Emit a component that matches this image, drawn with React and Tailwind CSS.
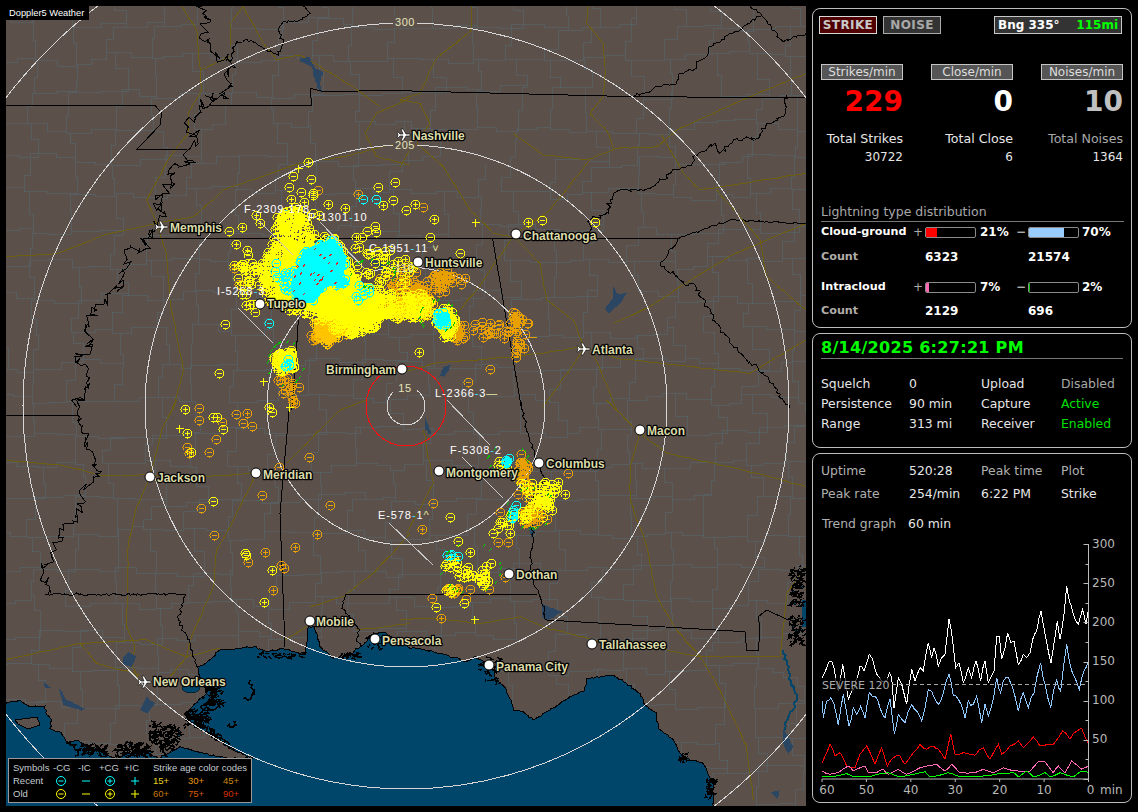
import React, { useMemo } from 'react';

const LAND = '#5c504b';
const WATER = '#00466b';
const COUNTY = '#585e60';
const ROAD = '#6e5e10';
const LAKE = '#2a4663';

const rngFrom = (seed) => () => {
  seed |= 0;
  seed = (seed + 0x6d2b79f5) | 0;
  let t = Math.imul(seed ^ (seed >>> 15), 1 | seed);
  t = (t + Math.imul(t ^ (t >>> 7), 61 | t)) ^ t;
  return ((t ^ (t >>> 14)) >>> 0) / 4294967296;
};

const parse = (s) => s.trim().split(/\s+/).map((p) => p.split(',').map(Number));
const toPath = (pts, close) => `M${pts.map((p) => `${p[0].toFixed(1)} ${p[1].toFixed(1)}`).join('L')}${close ? 'Z' : ''}`;

// subdivide and wobble a line so that rivers and coasts look hand traced
const jag = (pts, amp, step, rand) => {
  const out = [];
  for (let i = 0; i < pts.length - 1; i++) {
    const [ax, ay] = pts[i];
    const [bx, by] = pts[i + 1];
    const n = Math.max(1, Math.round(Math.hypot(bx - ax, by - ay) / step));
    for (let k = 0; k < n; k++) {
      const t = k / n;
      const w = k === 0 ? 0 : amp;
      out.push([ax + (bx - ax) * t + (rand() - 0.5) * w, ay + (by - ay) * t + (rand() - 0.5) * w]);
    }
  }
  out.push(pts[pts.length - 1]);
  return out;
};

// crops of the picture: lines are traced per quadrant at 3x
const QUADS = {
  a: [0, 0],
  b: [400, 0],
  c: [0, 400],
  d: [400, 400],
  z: [200, 170],
};
const fromQuad = (q, pts) => pts.map(([x, y]) => [QUADS[q][0] + x / 3, QUADS[q][1] + y / 3]);

const STATE_LINES = [
  ['a', '18,316 465,316 485,340 480,375 412,447 560,447', 0],
  ['a', '605,18 625,60 605,100 640,160 680,180 695,200 680,240 695,250 670,295 640,280 625,320 605,305 605,340 565,380 590,410 565,450 575,480 510,520 525,550 490,580 460,610 490,640 470,680 430,715 440,745 390,745 370,810 370,860 330,880 290,930 255,995 275,1040 225,1070 260,1130 230,1220', 12],
  ['c', '230,0 240,20 235,65 270,150 300,220 240,270 245,320 190,390 155,470 130,510 145,583', 10],
  ['c', '18,45 235,45', 0],
  ['c', '135,583 555,583 535,660 570,730 590,800', 3],
  ['a', '630,315 935,315 930,265 970,275 1230,270', 0],
  ['a', '690,185 710,125 740,118 800,150 835,165 850,130 835,90 850,65 900,60 930,40 910,18', 3],
  ['b', '0,272 700,290 1220,293', 0],
  ['b', '700,290 790,255 830,250 840,220 890,205 890,185 920,170 925,145 1085,45 1050,18', 3],
  ['b', '1085,45 1150,125 1218,100', 3],
  ['b', '1160,285 1150,350 1100,370 1075,415 1000,420 960,460 945,430 885,465 875,495 830,510 750,565 660,570 630,600 625,640 570,660 568,718', 4],
  ['a', '430,715 1230,715', 0],
  ['b', '0,715 838,715', 0],
  ['b', '838,715 990,660 1218,670', 2],
  ['b', '838,715 780,790 855,855 885,855 960,990 1040,1080 1100,1130 1170,1225', 4],
  ['b', '278,718 365,1230', 0],
  ['d', '360,0 385,100 405,170 435,240 400,290 400,420 390,510 425,610 440,660', 3],
  ['d', '440,660 1035,695 1040,750 1075,750 1080,690 1075,650 1100,630 1165,660', 0],
  ['a', '895,960 890,1040 875,1230', 0],
  ['c', '870,0 840,340 855,740', 0],
  ['c', '1035,583 1230,583', 0],
  ['d', '0,583 410,583', 0],
  ['c', '1035,583 1025,625 1080,690 1070,720 1085,740', 3],
];

const ROADS = [
  ['a', '545,18 590,90 605,270 565,340 565,400 510,470 440,600 470,670 500,760 510,900 540,1060 550,1110 520,1230'],
  ['c', '530,0 485,90 450,230 410,320 385,430 380,680 405,740 395,790 420,850'],
  ['a', '18,770 170,760 330,700 470,670 580,650 670,570 900,490 1030,470 1190,430'],
  ['a', '730,18 690,70 690,140'],
  ['a', '730,20 790,130 830,180 900,165 1060,260 1140,320'],
  ['a', '1230,295 1130,340 1095,400 1130,470 1230,495'],
  ['a', '600,210 690,170'],
  ['b', '565,18 560,70 610,130 615,200 610,290 570,340 625,400 640,445'],
  ['b', '215,18 215,90 105,180 60,280 0,300'],
  ['b', '0,300 60,310 90,370 50,430 130,500 210,630 280,700 340,710'],
  ['b', '40,430 0,500'],
  ['b', '340,400 430,465 560,480 650,445 770,440 830,390 1050,290 1218,220'],
  ['b', '570,480 450,630 340,710 230,870 120,1000'],
  ['b', '340,710 420,790 440,900 520,960 550,1040'],
  ['b', '640,970 750,920 840,860 985,770 1218,670'],
  ['b', '785,405 850,520 900,570 1030,550 1218,520'],
  ['b', '950,570 1080,720 1100,830 1218,930'],
  ['b', '0,1120 100,1090 350,1070 550,1040 650,1075 1050,1120 1218,1020'],
  ['b', '550,1050 430,1220'],
  ['b', '580,1060 650,1230'],
  ['c', '18,180 180,195 300,225 440,225 620,230 770,220 705,350 650,450 640,560 570,720 560,770 510,830'],
  ['c', '860,190 1020,30 1100,0'],
  ['c', '18,780 240,730 440,720 560,770 660,745'],
  ['c', '240,730 290,790 420,825'],
  ['c', '930,620 1030,590 1130,510 1230,400'],
  ['c', '855,720 920,680'],
  ['c', '1070,690 1230,670'],
  ['d', '0,660 90,655 240,670 360,650 430,680 580,720 800,750 900,770 1140,770'],
  ['d', '720,100 690,200 690,300 740,440 770,590 830,690 900,770 960,870 1040,1040 1060,1200'],
  ['d', '620,0 720,100 800,160 1030,210 1218,260'],
  ['d', '1140,770 1160,580 1218,500'],
  ['d', '70,90 100,250 20,400'],
];

const LAKES = [
  ['a', '900,175 930,170 945,205 970,215 960,250 970,285 950,260 935,200 900,185'],
  ['b', '640,860 650,880 680,880 660,910 625,940 615,925 640,895'],
  ['b', '130,1100 155,1095 135,1130 118,1130'],
  ['z', '505,275 530,270 575,295 560,305 530,285'],
  ['c', '385,757 410,770 395,800 370,795 368,775'],
  ['c', '130,845 155,865 135,865'],
  ['c', '175,860 200,900 255,925 245,932 190,915'],
  ['c', '440,890 465,910 440,940 420,930'],
  ['d', '75,50 95,100 85,102 75,80'],
  ['d', '385,380 410,380 395,415'],
  ['d', '425,610 470,630 490,635 445,660 425,650'],
  ['d', '1150,985 1180,1040 1165,1065 1150,1030'],
  ['d', '1110,1175 1140,1170 1135,1200'],
];

const COAST_WEST = '18,910 60,900 90,920 135,918 140,945 155,960 150,985 185,1000 200,1030 230,1020 260,1040 300,1045 320,1065 345,1075 420,1050 445,1060 475,1075 540,1040 610,1060 690,1075 760,1075';
const COAST_C = '760,1075 700,1050 640,1010 580,975 555,945 585,910 620,880 590,800 610,795 640,770 660,750 720,745 760,740 800,755 850,745 915,765 925,680 945,680 960,740 1000,775 1040,770 1075,745 1090,735 1125,700 1160,700 1230,745';
const COAST_D = '60,745 140,765 200,785 225,770 265,790 300,850 320,870 340,930 370,935 400,960 450,930 510,890 555,870 560,835 640,825 680,850 720,880 735,915 770,940 775,985 820,1020 850,1075 910,1090 940,1150 940,1218';
const MARSH_LINES = [
  '455,960 470,985 450,1000 490,1010 520,1050 480,1040 500,1070',
  '555,945 600,965 570,930 620,990 660,1020 630,985 700,1050',
  '620,860 650,880 625,900 660,910 640,930 610,915 600,945',
  '350,1060 390,1025 400,1060 440,1040 420,1070',
  '250,1030 290,1055 320,1040 310,1070',
  '200,1025 240,1050 225,1070',
  '750,840 762,870 755,895 730,895',
  '680,980 710,975 700,965',
];

const SCATTER = [
  ['a', 'ym878,527 y+895,505 yp925,487 ym932,538 ym868,561 ym904,577 yp872,596 yp912,607 ym940,585 om955,570 yp940,578 yp985,613 yp1036,625 ym1135,562 ym1186,547 ym1180,600 op1075,583 cm1088,598 cm1127,598 yp1150,616 ym1218,631 yp725,682 ym688,694 yp779,670 yp826,688 yp709,732 yp742,750 om703,805 ym1078,742 om718,853 ym766,937 ym676,973 cm808,970 ym658,1120 y+790,1144 om843,1150 om875,1150 om880,1200 om870,1170 om875,1190 om885,1210 om850,1180'],
  ['b', 'yp46,613 ym19,631 om70,622 yp103,658 y+225,665 yp385,667 ym425,661 ym91,712 ym180,760 ym586,667 yp58,1057 om271,1108 om205,1145 om385,970 op373,1045 om349,1072 om349,1045 o-395,1012 om350,1022 op345,998'],
  ['c', 'yp556,28 om598,25 om598,61 yp640,52 yp652,52 om667,67 ym670,88 om709,43 op742,40 om730,70 om757,79 yp808,22 ym817,37 yp562,100 y+538,85 om649,118 om562,142 yp574,157 op568,160 om628,157 om838,202 om928,172 ym640,304 om604,325 om787,286 om643,406 om991,316 op952,403 op886,442 op796,457 ym736,460 ym738,465 om745,485 om844,496 om853,505 yp817,511 op820,571 yp793,607 y+866,20 op880,5'],
  ['d', 'om505,220 om100,310 ym151,352 op67,388 ym175,424 om325,427 om295,427 yp211,457 ym274,490 om316,530 om268,568 om211,568 om97,595 ym109,622 op124,655 y+223,658 om199,598 ym193,610 ym278,400 ym295,385 om300,335 ym305,365'],
];

const SPOTS = [
  // cx, cy, sx, sy, n, layer (plain screen coords)
  [544, 497, 8, 9, 45, 'y'],
  [532, 514, 5, 5, 35, 'o'],
  [522, 470, 4, 6, 18, 'o'],
  [526, 488, 6, 6, 10, 'o'],
  [507, 461, 2, 2, 5, 'c'],
  [513, 513, 1, 5, 6, 'c'],
  [519, 518, 7, 6, 18, 'y'],
  [500, 463, 5, 3, 5, 'y'],
  [450, 554, 3, 1, 2, 'c'],
  [455, 554, 3, 1, 2, 'c'],
  [452, 560, 6, 4, 8, 'y'],
  [466, 576, 4, 4, 8, 'y'],
  [480, 580, 5, 3, 8, 'y'],
  [484, 574, 3, 3, 5, 'y'],
  [448, 590, 5, 2, 10, 'o'],
  [452, 590, 5, 2, 4, 'y'],
  [490, 328, 15, 5, 26, 'o'],
  [515, 320, 5, 4, 14, 'o'],
  [518, 345, 3, 8, 5, 'o'],
];

const CYAN = '310,240 400,205 440,260 430,320 450,345 380,350 340,400 290,400 270,350 290,300';
const YELLOW = '240,135 305,130 345,195 405,200 450,280 480,340 560,365 660,365 700,400 680,440 560,455 490,485 440,495 380,475 345,445 280,425 205,405 170,320 155,290 205,245 225,195';
const YELLOW_CORE = '285,215 330,220 400,220 440,280 470,345 560,375 640,380 620,440 560,445 490,470 440,480 380,465 350,430 280,405 240,385 215,320 225,285 255,250';
const GOLD_EAST = '600,380 685,375 700,400 680,440 590,445';
const GOLD = '340,450 380,450 420,460 470,480 410,505 380,525 345,495';
const EAST_Y = '695,425 740,410 765,440 770,490 730,505 705,470';
const EAST_CYAN = '705,430 740,425 745,465 715,468';
const LOW_Y = '220,555 275,535 288,590 270,610 232,600 215,575';

const inPoly = (x, y, poly) => {
  let hit = false;
  for (let i = 0, j = poly.length - 1; i < poly.length; j = i++) {
    const [xi, yi] = poly[i];
    const [xj, yj] = poly[j];
    if (yi > y !== yj > y && x < ((xj - xi) * (y - yi)) / (yj - yi) + xi) hit = !hit;
  }
  return hit;
};

const symbolPath = (x, y, kind) => {
  const r = 4.5;
  const ring = `M${x - r} ${y}a${r} ${r} 0 1 0 ${r * 2} 0a${r} ${r} 0 1 0 ${-r * 2} 0`;
  if (kind === 'm') return `${ring}M${x - 2.5} ${y}h5`;
  if (kind === 'p') return `${ring}M${x - 2.5} ${y}h5M${x} ${y - 2.5}v5`;
  if (kind === '-') return `M${x - 4} ${y}h8`;
  return `M${x - 4} ${y}h8M${x} ${y - 4}v8`;
};

const buildStrikes = () => {
  const rand = rngFrom(4242);
  const layers = { o: '', g: '', y: '', c: '' };
  const add = (layer, x, y, kind) => {
    layers[layer] += symbolPath(Math.round(x) + 0.5, Math.round(y) + 0.5, kind);
  };
  const kindOf = () => (rand() < 0.6 ? 'm' : 'p');
  const gauss = () => Math.sqrt(-2 * Math.log(rand() + 1e-6)) * Math.cos(6.283 * rand());

  SCATTER.forEach(([q, s]) => {
    [...s.matchAll(/([yoc])([mp+-])(\d+),(\d+)/g)].forEach(([, c, k, x, y]) => {
      const [[ax, ay]] = fromQuad(q, [[+x, +y]]);
      add(c, ax, ay, k);
    });
  });

  const fillPoly = (str, n, layer, kindFn) => {
    const poly = fromQuad('z', parse(str));
    const xs = poly.map((p) => p[0]);
    const ys = poly.map((p) => p[1]);
    let done = 0;
    let tries = 0;
    while (done < n && tries < n * 30) {
      tries += 1;
      const x = Math.min(...xs) + rand() * (Math.max(...xs) - Math.min(...xs));
      const y = Math.min(...ys) + rand() * (Math.max(...ys) - Math.min(...ys));
      if (inPoly(x, y, poly)) {
        add(layer, x, y, kindFn());
        done += 1;
      }
    }
  };

  fillPoly(YELLOW, 700, 'y', kindOf);
  fillPoly(GOLD, 70, 'g', kindOf);
  fillPoly(GOLD_EAST, 40, 'g', kindOf);
  fillPoly(EAST_Y, 50, 'y', kindOf);
  fillPoly(LOW_Y, 40, 'y', kindOf);
  fillPoly(CYAN, 90, 'c', kindOf);
  fillPoly('190,285 310,240 310,400 240,370', 26, 'c', kindOf);
  fillPoly(EAST_CYAN, 16, 'c', kindOf);
  fillPoly('235,565 270,565 268,590 235,590', 5, 'c', kindOf);
  fillPoly('470,345 540,330 530,400 460,410', 7, 'c', kindOf);

  // orange bands along the line of storms
  [[640, 360, 70, 30, 50], [735, 325, 35, 15, 30], [770, 490, 15, 30, 12], [260, 640, 30, 15, 8], [360, 490, 30, 25, 18], [600, 330, 60, 40, 20]].forEach(([zx, zy, sx, sy, n]) => {
    for (let i = 0; i < n; i++) {
      const [[x, y]] = fromQuad('z', [[zx + gauss() * sx * 0.6, zy + gauss() * sy * 0.6]]);
      add('o', x, y, kindOf());
    }
  });
  // loose yellow fringe of the main cell
  [[140, 310, 30, 70, 26], [270, 140, 50, 30, 30], [540, 250, 50, 60, 22], [560, 310, 70, 30, 18]].forEach(([zx, zy, sx, sy, n]) => {
    for (let i = 0; i < n; i++) {
      const [[x, y]] = fromQuad('z', [[zx + gauss() * sx * 0.6, zy + gauss() * sy * 0.6]]);
      add('y', x, y, kindOf());
    }
  });
  SPOTS.forEach(([cx, cy, sx, sy, n, layer]) => {
    for (let i = 0; i < n; i++) add(layer, cx + gauss() * sx, cy + gauss() * sy, kindOf());
  });

  // little tick marks around the cells
  let green = '';
  let red = '';
  [[372, 275, 22, 14], [285, 365, 18, 22], [437, 318, 18, 16], [507, 461, 20, 14], [530, 510, 24, 20], [470, 570, 30, 25]].forEach(([cx, cy, rx, ry]) => {
    for (let i = 0; i < 16; i++) {
      const a = rand() * 6.283;
      const x = cx + Math.cos(a) * rx;
      const y = cy + Math.sin(a) * ry;
      green += `M${x.toFixed(1)} ${y.toFixed(1)}l2 -3`;
    }
  });
  for (let i = 0; i < 24; i++) {
    red += `M${(292 + rand() * 46).toFixed(1)} ${(250 + rand() * 46).toFixed(1)}l2 -2`;
  }
  return { ...layers, green, red };
};

const buildMap = () => {
  const rand = rngFrom(77);
  const roads = ROADS.map(([q, s]) => toPath(jag(fromQuad(q, parse(s)), 1, 7, rand)));
  const states = STATE_LINES.map(([q, s, w]) => toPath(w ? jag(fromQuad(q, parse(s)), w, 2.6, rand) : fromQuad(q, parse(s))));
  const lakes = LAKES.map(([q, s]) => toPath(jag(fromQuad(q, parse(s)), 1.4, 3, rand), true));

  // gulf in two parts either side of the river delta
  const west = toPath(jag(fromQuad('c', parse(COAST_WEST)), 1.8, 2.4, rand));
  const east = toPath(jag([...fromQuad('c', parse(COAST_C)), ...fromQuad('d', parse(COAST_D))], 1.8, 2.4, rand));
  const waterWest = `${west}L253 806L6 806Z`;
  const waterEast = `${east}L713 806L253 806Z`;
  const marshLines = MARSH_LINES.map((s) => toPath(jag(fromQuad('c', parse(s)), 5, 1.6, rand)));

  // county grid
  const cx = 40;
  const cy = 34;
  const grid = [];
  for (let r = 0; r < 25; r++) {
    const row = [];
    for (let c = 0; c < 22; c++) {
      row.push([c * cx - 10 + (rand() - 0.5) * 18 + (r % 2) * 10, r * cy - 10 + (rand() - 0.5) * 14]);
    }
    grid.push(row);
  }
  let county = '';
  const edge = (a, b) => {
    const mid = [(a[0] + b[0]) / 2 + (rand() - 0.5) * 8, (a[1] + b[1]) / 2 + (rand() - 0.5) * 8];
    county += `M${a[0].toFixed(0)} ${a[1].toFixed(0)}L${mid[0].toFixed(0)} ${a[1].toFixed(0)}L${mid[0].toFixed(0)} ${mid[1].toFixed(0)}L${b[0].toFixed(0)} ${mid[1].toFixed(0)}L${b[0].toFixed(0)} ${b[1].toFixed(0)}`;
  };
  grid.forEach((row, r) =>
    row.forEach((p, c) => {
      if (c < row.length - 1 && rand() > 0.1) edge(p, row[c + 1]);
      if (r < grid.length - 1 && rand() > 0.1) edge(p, grid[r + 1][c]);
    })
  );

  // marsh speckle: small water holes with a black rim, close to river mouths
  let marsh = '';
  const blobs = [
    ['c', 640, 885, 25, 30, 50],
    ['c', 590, 955, 35, 25, 70],
    ['c', 490, 1005, 45, 30, 110],
    ['c', 400, 1050, 55, 20, 70],
    ['c', 280, 1045, 40, 15, 50],
    ['c', 1050, 765, 25, 8, 20],
    ['c', 840, 765, 70, 6, 30],
    ['c', 1125, 725, 25, 18, 20],
    ['d', 265, 810, 30, 40, 30],
    ['d', 1190, 560, 20, 60, 90],
    ['d', 1190, 690, 20, 40, 70],
    ['d', 930, 1165, 12, 30, 30],
    ['d', 850, 1075, 12, 15, 12],
  ];
  blobs.forEach(([q, x, y, sx, sy, n]) => {
    for (let i = 0; i < n; i++) {
      const [[px, py]] = fromQuad(q, [[x + (rand() - 0.5) * sx * 2, y + (rand() - 0.5) * sy * 2]]);
      marsh += `M${px.toFixed(1)} ${py.toFixed(1)}l${(rand() * 6 - 3).toFixed(1)} ${(rand() * 4 - 1).toFixed(1)}l${(rand() * 4).toFixed(1)} ${(rand() * 4 - 3).toFixed(1)}z`;
    }
  });
  const river = toPath(jag(fromQuad('d', parse('1150,750 1165,810 1190,900 1165,950 1155,990')), 3, 2.5, rand));
  const eastWater = toPath(fromQuad('d', parse('1205,600 1220,600 1220,680 1205,680')), true);
  return { roads, states, lakes, waterWest, waterEast, west, east, marshLines, county, marsh, river, eastWater };
};

const DOT_CITIES = [
  ['Tupelo', 260, 304, 267, 308],
  ['Huntsville', 418, 262, 425, 267],
  ['Chattanooga', 516, 234, 523, 240],
  ['Birmingham', 402, 369, 326, 374],
  ['Macon', 640, 430, 647, 435],
  ['Columbus', 539, 463, 546, 468],
  ['Montgomery', 439, 471, 446, 477],
  ['Jackson', 150, 477, 157, 482],
  ['Meridian', 256, 473, 263, 479],
  ['Dothan', 509, 574, 516, 579],
  ['Mobile', 310, 621, 316, 626],
  ['Pensacola', 375, 639, 382, 645],
  ['Panama City', 489, 665, 496, 671],
  ['Tallahassee', 592, 644, 599, 649],
];
const PLANE_CITIES = [
  ['Nashville', 404, 135, 412, 140],
  ['Memphis', 162, 227, 170, 232],
  ['Atlanta', 584, 349, 592, 354],
  ['New Orleans', 145, 682, 153, 686],
];
const CELLS = [
  ['F', '2309', '178', '', 244, 213, 255, 217, 293, 255],
  ['P', '1301', '10', '', 308, 221, 320, 222, 364, 268],
  ['C', '1951', '11', ' ˅', 369, 252, 0, 0, 0, 0],
  ['I', '5268', '3', '', 217, 295, 238, 308, 273, 343],
  ['L', '2366', '3', '—', 435, 397, 447, 400, 490, 445],
  ['F', '5308', '2', '', 450, 454, 462, 457, 503, 498],
  ['E', '578', '1', '^', 378, 519, 389, 523, 433, 565],
];
const RANGE_LABELS = [
  ['300', 405, 26],
  ['205', 405, 149],
  ['110', 405, 272],
  ['15', 405, 392],
];

const RadarMap = () => {
  const map = useMemo(buildMap, []);
  const strikes = useMemo(buildStrikes, []);
  return (
    <svg viewBox="6 6 800 800" className="block w-[800px] h-[800px]" shapeRendering="crispEdges">
      <rect x="6" y="6" width="800" height="800" fill={LAND} />
      <path d={map.county} fill="none" stroke={COUNTY} strokeWidth="1" />
      <path d={map.roads.join('')} fill="none" stroke={ROAD} strokeWidth="1" />
      <path d={map.waterWest} fill={WATER} />
      <path d={map.waterEast} fill={WATER} />
      <path d={map.west + map.east} fill="none" stroke="#000" strokeWidth="1" />
      <path d="M15 720L37 717L40 725L28 729L18 724Z" fill={LAND} stroke="#000" strokeWidth="1" />
      <ellipse cx="191" cy="688" rx="9" ry="5" fill={WATER} stroke="#000" strokeWidth="0.5" />
      <path d={map.lakes.join('')} fill={LAKE} />
      <path d={map.river} fill="none" stroke={WATER} strokeWidth="2" />
      <path d={map.eastWater} fill={WATER} />
      <path d={map.marsh} fill={WATER} stroke="#000" strokeWidth="1" />
      <path d={map.marshLines.join('')} fill="none" stroke="#000" strokeWidth="1.5" />
      <path d={map.states.join('')} fill="none" stroke="#000" strokeWidth="1" />

      {[505, 383, 261, 139, 19].map((r) => (
        <circle key={r} cx="406" cy="406" r={r} fill="none" stroke="#d6d6d6" strokeWidth="1" />
      ))}
      <circle cx="406" cy="406" r="40" fill="none" stroke="#ff1010" strokeWidth="1" />
      {RANGE_LABELS.map(([t, x, y]) => (
        <rect key={t} x={x - 12} y={y - 10} width="24" height="12" fill={LAND} />
      ))}

      <g fill="none" strokeWidth="1">
        <path d={toPath(fromQuad('z', parse(YELLOW_CORE)), true)} fill="#ffff00" stroke="none" />
        <path d={toPath(fromQuad('z', parse(GOLD)), true)} fill="#ffc400" stroke="none" />
        <path d={toPath(fromQuad('z', parse(EAST_Y)), true)} fill="#ffe600" stroke="none" />
        <path d={toPath(fromQuad('z', parse(LOW_Y)), true)} fill="#ffd000" stroke="none" />
        <path d={strikes.o} stroke="#e8a000" />
        <path d={strikes.g} stroke="#ffc400" />
        <path d={toPath(fromQuad('z', parse(GOLD_EAST)), true)} fill="#ffc400" stroke="none" />
        <path d={strikes.y} stroke="#ffff00" />
        <path d={toPath(fromQuad('z', parse(CYAN)), true)} fill="#00ffff" stroke="none" />
        <path d={toPath(fromQuad('z', parse(EAST_CYAN)), true)} fill="#00ffff" stroke="none" />
        <path d={strikes.c} stroke="#00ffff" />
        <path d={strikes.green} stroke="#00c000" />
        <path d={strikes.red} stroke="#e02020" />
      </g>

      {RANGE_LABELS.map(([t, x, y]) => (
        <text key={t} x={x} y={y} textAnchor="middle" fontFamily="'Liberation Sans', sans-serif" fontSize="11" letterSpacing="0.6" fill="#e4e4b8">
          {t}
        </text>
      ))}

      {CELLS.map(([a, b, c, tail, x, y, x1, y1, x2, y2]) => (
        <g key={a + b}>
          {x2 ? <line x1={x1} y1={y1} x2={x2} y2={y2} stroke="#c8c8c8" strokeWidth="1" /> : null}
          <text x={x} y={y} fontFamily="'Liberation Sans', sans-serif" fontSize="11" letterSpacing="0.9" fill="#ffffff">
            {a}-{b}
            <tspan fill="#40e0ff">-</tspan>
            {c}
            <tspan fill="#e8e8a0">{tail}</tspan>
          </text>
        </g>
      ))}

      {DOT_CITIES.map(([name, dx, dy]) => (
        <circle key={name} cx={dx} cy={dy} r="5" fill="#fff" stroke="#000" strokeWidth="1" shapeRendering="auto" />
      ))}
      {PLANE_CITIES.map(([name, dx, dy]) => (
        <path
          key={name}
          transform={`translate(${dx} ${dy})`}
          d="M7 0L5 -1L2 -1L-1 -6L-3 -6L-1 -1L-4 -1L-6 -3L-7 -3L-6 0L-7 3L-6 3L-4 1L-1 1L-3 6L-1 6L2 1L5 1Z"
          fill="#fff"
          stroke="#000"
          strokeWidth="0.6"
          shapeRendering="auto"
        />
      ))}
      {[...DOT_CITIES, ...PLANE_CITIES].map(([name, , , tx, ty]) => (
        <text
          key={name}
          x={tx}
          y={ty}
          fontFamily="'Liberation Sans', sans-serif"
          fontSize="12"
          fontWeight="700"
          fill="#dcdcaa"
          stroke="#000"
          strokeWidth="2.5"
          paintOrder="stroke"
          strokeLinejoin="round"
        >
          {name}
        </text>
      ))}
    </svg>
  );
};

const LEGEND_COLS = 'grid grid-cols-[40px_25px_21px_25px_29px_35px_35px_auto] items-center h-[13px]';

const LegendSym = ({ color, kind, className = '' }) => (
  <svg viewBox="-6 -6 12 12" className={`w-[12px] h-[12px] ${className}`}>
    <path d={symbolPath(0, 0, kind)} fill="none" stroke={color} strokeWidth="1" />
  </svg>
);

const Legend = () => (
  <div className="absolute left-[2px] bottom-[3px] w-[244px] h-[45px] bg-black border border-[#999] pl-[4px] pt-[2px] font-['Liberation_Sans',sans-serif] text-[9.5px] leading-[13px] text-[#c5ccd2]">
    <div className={LEGEND_COLS}>
      <span>Symbols</span>
      <span>-CG</span>
      <span>-IC</span>
      <span>+CG</span>
      <span>+IC</span>
      <span className="col-span-3 whitespace-nowrap">Strike age color codes</span>
    </div>
    <div className={LEGEND_COLS}>
      <span>Recent</span>
      <LegendSym color="#00ffff" kind="m" className="ml-[2px]" />
      <LegendSym color="#00ffff" kind="-" className="ml-[2px]" />
      <LegendSym color="#00ffff" kind="p" className="ml-[5px]" />
      <LegendSym color="#00ffff" kind="+" className="ml-[5px]" />
      <span className="text-[#e8d020]">15+</span>
      <span className="text-[#e89a10]">30+</span>
      <span className="text-[#c88a10]">45+</span>
    </div>
    <div className={LEGEND_COLS}>
      <span>Old</span>
      <LegendSym color="#ffff00" kind="m" className="ml-[2px]" />
      <LegendSym color="#ffff00" kind="-" className="ml-[2px]" />
      <LegendSym color="#ffff00" kind="p" className="ml-[5px]" />
      <LegendSym color="#ffff00" kind="+" className="ml-[5px]" />
      <span className="text-[#c87808]">60+</span>
      <span className="text-[#d85a00]">75+</span>
      <span className="text-[#d83000]">90+</span>
    </div>
  </div>
);

const Panel = ({ className = '', children }) => (
  <div className={`border border-[#bdbdbd] rounded-[8px] ${className}`}>{children}</div>
);

const StatHeader = ({ children }) => (
  <div className="h-[16px] border border-[#c4c4c4] bg-[#555] text-center text-[12px] leading-[14px] text-[#ddd]">{children}</div>
);

const TypeBar = ({ fill, width }) => (
  <div className="h-[11px] w-[51px] rounded-[2px] border border-[#8a8a8a] overflow-hidden">
    <div className={`h-full ${fill} ${width}`} />
  </div>
);

const DIST_COLS = 'grid grid-cols-[92px_12px_55px_36px_12px_54px_40px] items-center h-[14px]';

const TypeRow = ({ name, plus, plusFill, plusWidth, minus, minusFill, minusWidth, className = '' }) => (
  <div className={`${DIST_COLS} font-bold text-white ${className}`}>
    <span className="text-[11.2px]">{name}</span>
    <span className="font-normal text-[#aaa]">+</span>
    <TypeBar fill={plusFill} width={plusWidth} />
    <span>{plus}</span>
    <span className="text-[#aaa]">−</span>
    <TypeBar fill={minusFill} width={minusWidth} />
    <span>{minus}</span>
  </div>
);

const CountRow = ({ a, b, className = '' }) => (
  <div className={`${DIST_COLS} ${className}`}>
    <span className="font-bold text-[11.2px] text-[#b0aca8]">Count</span>
    <span />
    <span className="font-bold text-white">{a}</span>
    <span />
    <span />
    <span className="font-bold text-white">{b}</span>
    <span />
  </div>
);

const INFO_COLS = 'grid grid-cols-[88px_72px_80px_auto] items-center h-[20px] text-[12.4px]';

const InfoRow = ({ cells, h = '', className = '' }) => (
  <div className={`${INFO_COLS} ${h} ${className}`}>
    {cells.map(([text, color]) => (
      <span key={text} className={color}>
        {text}
      </span>
    ))}
  </div>
);

const WHITE_LINE = '37,680 50,650 58,630 72,650 78,690 85,720 98,640 105,680 115,745 125,720 137,690 150,645 162,660 178,610 188,625 200,670 215,690 225,690 238,665 245,680 252,770 265,680 275,700 290,760 305,655 315,690 330,650 340,660 355,575 365,620 372,590 385,645 395,620 405,610 417,505 428,570 437,650 447,635 460,695 475,650 485,680 498,630 512,690 525,630 535,695 552,660 560,555 568,555 575,625 585,590 593,545 603,575 612,570 625,640 640,610 650,620 660,605 668,565 680,540 693,480 700,520 710,575 723,635 742,510 750,565 762,490 770,405 778,450 790,490 805,520 818,475 828,520 836,470';
const BLUE_LINE = '37,750 40,800 50,750 62,740 72,760 85,822 100,730 117,825 130,770 140,790 152,765 165,800 178,725 195,735 210,770 225,800 240,745 253,848 265,790 285,815 305,760 320,780 335,810 355,715 375,745 385,760 400,725 417,670 430,735 445,745 465,800 475,750 490,760 500,735 515,815 525,760 535,795 550,745 560,680 572,725 580,690 595,680 608,710 625,780 640,725 655,770 672,725 692,635 705,700 722,770 740,685 752,720 770,580 785,660 795,680 808,715 822,660 836,630';
const RED_LINE = '37,935 45,915 60,880 75,915 90,905 110,945 135,950 150,910 170,885 195,940 215,890 232,945 250,920 270,915 285,940 310,905 330,880 350,895 370,885 385,895 405,925 422,848 435,910 460,905 495,913 520,890 540,925 565,880 575,910 600,885 625,870 640,890 670,858 690,885 730,880 758,840 780,865 800,840 815,832 836,880';
const PINK_LINE = '37,960 60,970 85,965 115,945 130,960 165,945 175,965 200,965 220,955 235,970 265,955 290,970 330,950 380,940 405,960 425,940 450,965 495,965 520,955 550,965 580,950 625,960 660,960 685,932 705,932 730,965 745,945 765,965 785,930 815,955 836,945';
const GREEN_LINE = '37,975 60,978 110,968 130,978 185,975 235,965 270,978 345,962 360,978 415,965 450,978 520,975 565,968 610,965 625,978 650,960 670,978 705,965 720,978 750,965 790,978 815,960 836,965';

// traced peaks plus a little noise between them
const chartPts = (s, noise, seed) => {
  const rand = rngFrom(seed);
  const pts = parse(s);
  const out = [];
  pts.forEach(([x, y], i) => {
    out.push([x, y]);
    const next = pts[i + 1];
    if (next && next[0] - x > 10) {
      const mx = (x + next[0]) / 2;
      out.push([mx, (y + next[1]) / 2 + (rand() - 0.5) * noise]);
    }
  });
  return out.map(([x, y]) => `${(810 + x / 3).toFixed(1)},${(450 + Math.min(y, 980) / 3).toFixed(1)}`).join(' ');
};

const TrendChart = () => {
  const axisX = 1088.5;
  const top = 543;
  const base = 778;
  const ticks = [];
  for (let v = 0; v <= 300; v += 25) ticks.push(v);
  return (
    <svg viewBox="813 534 318 268" className="block w-[318px] h-[268px]">
      <g fill="none" strokeWidth="1" shapeRendering="crispEdges">
        <polyline points={chartPts(WHITE_LINE, 18, 1)} stroke="#ffffff" />
        <polyline points={chartPts(BLUE_LINE, 18, 2)} stroke="#8ec8ff" />
        <polyline points={chartPts(RED_LINE, 9, 3)} stroke="#ff0000" />
        <polyline points={chartPts(PINK_LINE, 5, 4)} stroke="#ff69b4" />
        <polyline points={chartPts(GREEN_LINE, 4, 5)} stroke="#00ff00" />
      </g>
      <rect x="821" y="677" width="70" height="13" fill="#000" opacity="0.75" />
      <line x1="892" y1="683.5" x2={axisX} y2="683.5" stroke="#a8a8a8" strokeDasharray="4 3" />
      <text x="822" y="688" fontFamily="'DejaVu Sans', sans-serif" fontSize="11" fill="#aaa">
        SEVERE 120
      </text>
      <line x1={axisX} y1={top} x2={axisX} y2={base} stroke="#bbb" />
      <line x1="822" y1={base} x2={axisX} y2={base} stroke="#bbb" />
      {ticks.map((v) => {
        const y = Math.round(base - (v / 300) * (base - top)) + 0.5;
        return <line key={v} x1={axisX - (v % 50 === 0 ? 5 : 3)} x2={axisX} y1={y} y2={y} stroke="#bbb" />;
      })}
      {[300, 250, 200, 150, 100, 50].map((v) => (
        <text key={v} x="1092" y={base - (v / 300) * (base - top) + 3.5} fontFamily="'DejaVu Sans', sans-serif" fontSize="12" fill="#b8b8b8">
          {v}
        </text>
      ))}
      {[60, 50, 40, 30, 20, 10, 0].map((v) => {
        const x = axisX - (v / 60) * (axisX - 822);
        return (
          <g key={v}>
            <line x1={x} x2={x} y1={base} y2={base + 3} stroke="#bbb" />
            <text x={x + (v === 60 ? 5 : v === 0 ? 2 : 0)} y="792.5" textAnchor="middle" fontFamily="'DejaVu Sans', sans-serif" fontSize="12" fill="#b8b8b8">
              {v}
            </text>
          </g>
        );
      })}
      <text x="1100" y="792.5" fontFamily="'DejaVu Sans', sans-serif" fontSize="12" fill="#b8b8b8">
        min
      </text>
    </svg>
  );
};

export default function App() {
  return (
    <div className="flex w-[1138px] h-[812px] overflow-hidden bg-black font-['DejaVu_Sans',sans-serif] text-[12px] text-[#e6e6e6]">
      <div className="relative w-[800px] h-[800px] m-[6px] shrink-0">
        <RadarMap />
        <div className="absolute left-0 top-0 w-[83px] h-[14px] bg-black pl-[3px] font-['Liberation_Sans',sans-serif] text-[9.3px] leading-[14px] text-white whitespace-nowrap">
          Doppler5 Weather
        </div>
        <Legend />
      </div>

      <div className="w-[320px] pt-[8px] flex flex-col gap-[5px]">
        <Panel className="h-[320px] pl-[6px]">
          <div className="flex h-[18px] mt-[7px]">
            <div className="w-[58px] border border-[#d8d8d8] bg-[#500000] text-center font-bold text-[#c8c8c8] leading-[16px] tracking-[0.4px]">STRIKE</div>
            <div className="w-[58px] ml-[6px] border border-[#aaa] bg-[#333] text-center font-bold text-[#a8a8a8] leading-[16px] tracking-[0.4px]">NOISE</div>
            <div className="w-[128px] ml-[53px] border border-[#c8c8c8] bg-[#333] flex justify-between px-[3px] font-bold leading-[16px] text-white">
              <span>Bng 335°</span>
              <span className="text-[#00ff00]">115mi</span>
            </div>
          </div>

          <div className="grid grid-cols-[82px_82px_82px] gap-x-[28px] ml-[2px] mt-[30px] text-right">
            <StatHeader>Strikes/min</StatHeader>
            <StatHeader>Close/min</StatHeader>
            <StatHeader>Noises/min</StatHeader>
            <div className="h-[47px] font-bold text-[28px] leading-[44px] text-[#ff0000]">229</div>
            <div className="h-[47px] font-bold text-[28px] leading-[44px] text-white">0</div>
            <div className="h-[47px] font-bold text-[28px] leading-[44px] text-[#c0c0c0]">10</div>
            <div className="h-[18px] mt-[3px] text-[12.6px] leading-[18px] whitespace-nowrap justify-self-end text-[#e6e6e6]">Total Strikes</div>
            <div className="h-[18px] mt-[3px] text-[12.6px] leading-[18px] whitespace-nowrap justify-self-end text-[#e6e6e6]">Total Close</div>
            <div className="h-[18px] mt-[3px] text-[12.6px] leading-[18px] whitespace-nowrap justify-self-end text-[#a8a8a8]">Total Noises</div>
            <div className="h-[18px] leading-[18px]">30722</div>
            <div className="h-[18px] leading-[18px]">6</div>
            <div className="h-[18px] leading-[18px]">1364</div>
          </div>

          <div className="ml-[2px] w-[303px] mt-[38px] h-[18px] border-b border-[#777] text-[12.5px] text-[#a8a8a8] leading-[16px]">Lightning type distribution</div>
          <div className="ml-[2px]">
            <TypeRow className="mt-[1px]" name="Cloud-ground" plus="21%" plusFill="bg-[#ff0000]" plusWidth="w-[11px]" minus="70%" minusFill="bg-[#99ccff]" minusWidth="w-[35px]" />
            <CountRow className="mt-[11px]" a="6323" b="21574" />
            <TypeRow className="mt-[16px]" name="Intracloud" plus="7%" plusFill="bg-[#ff69b4]" plusWidth="w-[3px]" minus="2%" minusFill="bg-[#00c000]" minusWidth="w-[1px]" />
            <CountRow className="mt-[10px]" a="2129" b="696" />
          </div>
        </Panel>

        <Panel className="h-[115px] pl-[8px]">
          <div className="w-[302px] h-[25px] border-b border-[#777] font-bold text-[16px] tracking-[0.3px] leading-[28px] text-[#00ff00]">8/14/2025 6:27:21 PM</div>
          <div className="mt-[15px]">
            <InfoRow cells={[['Squelch'], ['0'], ['Upload'], ['Disabled', 'text-[#a8a8a8]']]} />
            <InfoRow cells={[['Persistence'], ['90 min'], ['Capture'], ['Active', 'text-[#00e000]']]} />
            <InfoRow cells={[['Range'], ['313 mi'], ['Receiver'], ['Enabled', 'text-[#00e000]']]} />
          </div>
        </Panel>

        <Panel className="h-[350px]">
          <div className="pl-[8px]">
            <InfoRow
              h="h-[23px]"
              className="mt-[6px]"
              cells={[['Uptime', 'text-[#b0b0b0]'], ['520:28'], ['Peak time', 'text-[#b0b0b0]'], ['Plot', 'text-[#b0b0b0]']]}
            />
            <InfoRow
              h="h-[23px]"
              cells={[['Peak rate', 'text-[#b0b0b0]'], ['254/min'], ['6:22 PM'], ['Strike']]}
            />
            <div className="flex items-center h-[20px] mt-[8px] pl-[1px] text-[12.4px]">
              <span className="w-[86px] text-[#b0b0b0]">Trend graph</span>
              <span>60 min</span>
            </div>
          </div>
          <div className="mt-[1px]">
            <TrendChart />
          </div>
        </Panel>
      </div>
    </div>
  );
}
